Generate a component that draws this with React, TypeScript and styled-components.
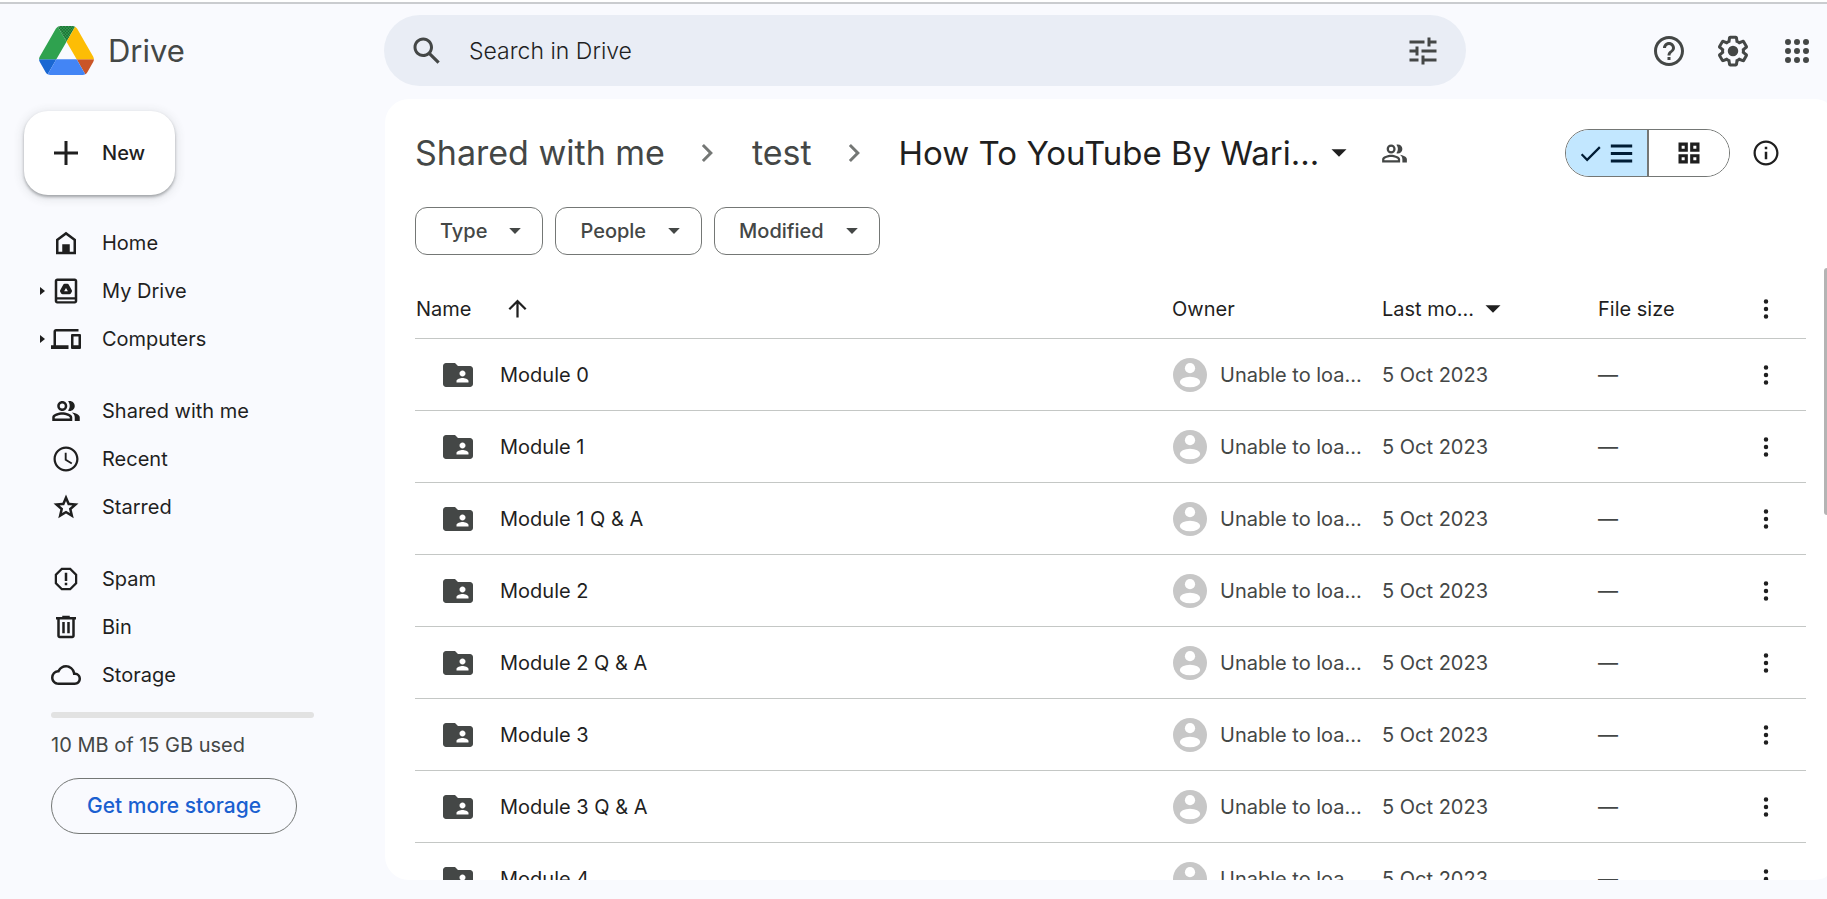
import React from 'react';
import styled, { createGlobalStyle } from 'styled-components';

const GlobalStyle = createGlobalStyle`
  *, *::before, *::after { box-sizing: border-box; }
  html, body { margin: 0; background: #f9fafe; }
  body {
    font-family: Inter, Roboto, "Liberation Sans", sans-serif;
    font-size: 20px;
    line-height: 24px;
    color: #1f1f1f;
    overflow: hidden;
  }
  button, input { font: inherit; color: inherit; }
  button { background: none; border: 0; padding: 0; cursor: pointer; }
  a { color: inherit; text-decoration: none; }
  svg { display: block; flex: none; fill: currentColor; }
`;

const PATHS = {
  search:
    'M20.49 19l-5.73-5.73C15.53 12.2 16 10.91 16 9.5 16 5.91 13.09 3 9.5 3S3 5.91 3 9.5 5.91 16 9.5 16c1.41 0 2.7-.47 3.77-1.24L19 20.49 20.49 19zM5 9.5C5 7.01 7.01 5 9.5 5S14 7.01 14 9.5 11.99 14 9.5 14 5 11.99 5 9.5z',
  tune: 'M3 17v2h6v-2H3zM3 5v2h10V5H3zm10 16v-2h8v-2h-8v-2h-2v6h2zM7 9v2H3v2h4v2h2V9H7zm14 4v-2H11v2h10zm-6-4h2V7h4V5h-4V3h-2v6z',
  help: 'M11 18h2v-2h-2v2zm1-16C6.48 2 2 6.48 2 12s4.48 10 10 10 10-4.48 10-10S17.52 2 12 2zm0 18c-4.41 0-8-3.59-8-8s3.59-8 8-8 8 3.59 8 8-3.59 8-8 8zm0-14c-2.21 0-4 1.79-4 4h2c0-1.1.9-2 2-2s2 .9 2 2c0 2-3 1.75-3 5h2c0-2.25 3-2.5 3-5 0-2.21-1.79-4-4-4z',
  settings:
    'M13.85 22.25h-3.7c-.74 0-1.36-.54-1.45-1.27l-.27-1.89c-.27-.14-.53-.29-.79-.46l-1.8.72c-.7.26-1.47-.03-1.81-.65L2.2 15.53c-.35-.66-.2-1.44.36-1.88l1.53-1.19c-.01-.15-.02-.3-.02-.46 0-.15.01-.31.02-.46l-1.52-1.19c-.59-.45-.74-1.26-.37-1.88l1.85-3.19c.34-.62 1.11-.9 1.79-.63l1.81.73c.26-.17.52-.32.78-.46l.27-1.91c.09-.7.71-1.25 1.44-1.25h3.7c.74 0 1.36.54 1.45 1.27l.27 1.89c.27.14.53.29.79.46l1.8-.72c.71-.26 1.48.03 1.82.65l1.84 3.18c.36.66.2 1.44-.36 1.88l-1.52 1.19c.01.15.02.3.02.46s-.01.31-.02.46l1.52 1.19c.56.45.72 1.23.37 1.86l-1.86 3.22c-.34.62-1.11.9-1.8.63l-1.8-.72c-.26.17-.52.32-.78.46l-.27 1.91c-.1.68-.72 1.22-1.46 1.22zm-3.23-2h2.76l.37-2.55.53-.22c.44-.18.88-.44 1.34-.78l.45-.34 2.38.96 1.38-2.4-2.03-1.58.07-.56c.03-.26.06-.51.06-.78s-.03-.53-.06-.78l-.07-.56 2.03-1.58-1.39-2.4-2.39.96-.45-.35c-.42-.32-.87-.58-1.33-.77l-.52-.22-.37-2.55h-2.76l-.37 2.55-.53.21c-.44.19-.88.44-1.34.79l-.45.33-2.38-.95-1.39 2.39 2.03 1.58-.07.56a7 7 0 0 0-.06.79c0 .26.02.53.06.78l.07.56-2.03 1.58 1.38 2.4 2.39-.96.45.35c.43.33.86.58 1.33.77l.53.22.38 2.55zM12 8.5a3.5 3.5 0 1 1 0 7 3.5 3.5 0 0 1 0-7z',
  apps: 'M6 4a2 2 0 1 1 0 4 2 2 0 0 1 0-4zm6 0a2 2 0 1 1 0 4 2 2 0 0 1 0-4zm6 0a2 2 0 1 1 0 4 2 2 0 0 1 0-4zM6 10a2 2 0 1 1 0 4 2 2 0 0 1 0-4zm6 0a2 2 0 1 1 0 4 2 2 0 0 1 0-4zm6 0a2 2 0 1 1 0 4 2 2 0 0 1 0-4zM6 16a2 2 0 1 1 0 4 2 2 0 0 1 0-4zm6 0a2 2 0 1 1 0 4 2 2 0 0 1 0-4zm6 0a2 2 0 1 1 0 4 2 2 0 0 1 0-4z',
  plus: 'M20 13h-7v7h-2v-7H4v-2h7V4h2v7h7v2z',
  home: 'M12 3L4 9v12h16V9l-8-6zm6 16h-3v-6H9v6H6v-9l6-4.5 6 4.5v9z',
  drive:
    'M19 2H5c-1.1 0-2 .9-2 2v16c0 1.1.9 2 2 2h14c1.1 0 2-.9 2-2V4c0-1.1-.9-2-2-2zm0 18.2H5v-1.5h14v1.5zm0-3.2H5V4h14v13zM13.1 6.2h-2.2c-.5 0-.9.25-1.15.7l-2.4 4.4c-.25.45-.25.9 0 1.3l.8 1.3c.25.4.65.6 1.1.6h5.5c.45 0 .85-.2 1.1-.6l.8-1.3c.25-.4.25-.85 0-1.3l-2.4-4.4c-.25-.45-.65-.7-1.15-.7zM10.5 12.2l1.5-2.7 1.5 2.7h-3z',
  devices:
    'M4 6h18V4H4c-1.1 0-2 .9-2 2v11H0v3h14v-3H4V6zm19 2h-6c-.55 0-1 .45-1 1v10c0 .55.45 1 1 1h6c.55 0 1-.45 1-1V9c0-.55-.45-1-1-1zm-1 9h-4v-7h4v7z',
  people:
    'M15 8c0-1.42-.5-2.73-1.33-3.76.42-.14.86-.24 1.33-.24 2.21 0 4 1.79 4 4s-1.79 4-4 4c-.43 0-.84-.09-1.23-.21-.03-.01-.06-.02-.1-.03A5.98 5.98 0 0 0 15 8zm1.66 5.13C18.03 14.06 19 15.32 19 17v3h4v-3c0-2.18-3.58-3.47-6.34-3.87zM9 6a2 2 0 1 0 0 4 2 2 0 0 0 0-4m0 6c-2.21 0-4-1.79-4-4s1.79-4 4-4 4 1.79 4 4-1.79 4-4 4zm0 1c-2.67 0-8 1.34-8 4v3h16v-3c0-2.66-5.33-4-8-4zm6 5H3v-.99C3.2 16.29 6.3 15 9 15s5.8 1.29 6 2v1z',
  clock:
    'M12 2C6.48 2 2 6.48 2 12s4.48 10 10 10 10-4.48 10-10S17.52 2 12 2zm0 18.2c-4.52 0-8.2-3.68-8.2-8.2S7.48 3.8 12 3.8s8.2 3.68 8.2 8.2-3.68 8.2-8.2 8.2zM12.5 7H11v6l5.25 3.15.75-1.23-4.5-2.67V7z',
  star: 'M12 7.13l.97 2.29.47 1.11 1.2.1 2.47.21-1.88 1.63-.91.79.27 1.18.56 2.41-2.12-1.28-1.03-.64-1.03.62-2.12 1.28.56-2.41.27-1.18-.91-.79-1.88-1.63 2.47-.21 1.2-.1.47-1.11.97-2.27M12 2L9.19 8.63 2 9.24l5.46 4.73L5.82 21 12 17.27 18.18 21l-1.64-7.03L22 9.24l-7.19-.61L12 2z',
  spam: 'M15.73 3H8.27L3 8.27v7.46L8.27 21h7.46L21 15.73V8.27L15.73 3zM19.2 15L15 19.2H9L4.8 15V9L9 4.8h6L19.2 9v6zM11 7h2v6.5h-2zm0 8h2v2h-2z',
  bin: 'M15 4V3H9v1H4v2h1v13c0 1.1.9 2 2 2h10c1.1 0 2-.9 2-2V6h1V4h-5zm2 15H7V6h10v13zM9 8h2v9H9zm4 0h2v9h-2z',
  cloud:
    'M19.35 10.04A7.49 7.49 0 0 0 12 4C9.11 4 6.6 5.64 5.35 8.04A5.994 5.994 0 0 0 0 14c0 3.31 2.69 6 6 6h13c2.76 0 5-2.24 5-5 0-2.64-2.05-4.78-4.65-4.96zM19 18H6c-2.21 0-4-1.79-4-4 0-2.05 1.53-3.76 3.56-3.97l1.07-.11.5-.95A5.469 5.469 0 0 1 12 6c2.62 0 4.88 1.86 5.39 4.43l.3 1.5 1.53.11A2.98 2.98 0 0 1 22 15c0 1.65-1.35 3-3 3z',
  folder:
    'M20 6h-8l-2-2H4c-1.1 0-1.99.9-1.99 2L2 18c0 1.1.9 2 2 2h16c1.1 0 2-.9 2-2V8c0-1.1-.9-2-2-2zm-5 3c1.1 0 2 .9 2 2s-.9 2-2 2-2-.9-2-2 .9-2 2-2zm4 8h-8v-1c0-1.33 2.67-2 4-2s4 .67 4 2v1z',
  info: 'M11 17h2v-6h-2v6zm1-15C6.48 2 2 6.48 2 12s4.48 10 10 10 10-4.48 10-10S17.52 2 12 2zm0 18.2c-4.52 0-8.2-3.68-8.2-8.2S7.48 3.8 12 3.8s8.2 3.68 8.2 8.2-3.68 8.2-8.2 8.2zM11 9h2V7h-2v2z',
  chevron: 'M9.31 6L7.9 7.41 12.49 12 7.9 16.59 9.31 18l6-6z',
  check: 'M9 16.2L4.8 12l-1.4 1.4L9 19 21 7l-1.4-1.4L9 16.2z',
  list: 'M2.5 4h19v2.7h-19zm0 6.7h19v2.7h-19zm0 6.7h19v2.7h-19z',
  arrowUp: 'M4 12l1.41 1.41L11 7.83V20h2V7.83l5.58 5.59L20 12l-8-8-8 8z',
  more: 'M12 4.2a1.8 1.8 0 1 1 0 3.6 1.8 1.8 0 0 1 0-3.6zm0 6a1.8 1.8 0 1 1 0 3.6 1.8 1.8 0 0 1 0-3.6zm0 6a1.8 1.8 0 1 1 0 3.6 1.8 1.8 0 0 1 0-3.6z',
  caretDown: 'M7 9.5l5 5 5-5z',
  grid: 'M3 3v8h8V3H3zm5.3 5.3H5.7V5.7h2.6v2.6zM3 13v8h8v-8H3zm5.3 5.3H5.7v-2.6h2.6v2.6zM13 3v8h8V3h-8zm5.3 5.3h-2.6V5.7h2.6v2.6zM13 13v8h8v-8h-8zm5.3 5.3h-2.6v-2.6h2.6v2.6z',
};

type IconName = keyof typeof PATHS;

function Icon({ name, size = 30 }: { name: IconName; size?: number }) {
  return (
    <svg width={size} height={size} viewBox="0 0 24 24" aria-hidden="true">
      <path fillRule="evenodd" d={PATHS[name]} />
    </svg>
  );
}

function DriveLogo() {
  return (
    <svg width="55" height="49" viewBox="0 0 87.3 78" aria-hidden="true">
      <defs>
        <pattern id="greenDots" width="4.8" height="4.8" patternUnits="userSpaceOnUse">
          <rect width="4.8" height="4.8" fill="#2fa24f" />
          <rect x="0.4" y="0.4" width="1.7" height="1.7" fill="#10301a" />
          <rect x="2.8" y="2.8" width="1.7" height="1.7" fill="#10301a" />
        </pattern>
      </defs>
      <path d="m6.6 66.85 3.85 6.65c.8 1.4 1.95 2.5 3.3 3.3l13.75-23.8h-27.5c0 1.55.4 3.1 1.2 4.5z" fill="#1967d2" />
      <path d="m43.65 25-13.75-23.8c-1.35.8-2.5 1.9-3.3 3.3l-25.4 44a9.06 9.06 0 0 0 -1.2 4.5h27.5z" fill="#2fa24f" />
      <path d="m73.55 76.8c1.35-.8 2.5-1.9 3.3-3.3l1.6-2.75 7.65-13.25c.8-1.4 1.2-2.95 1.2-4.5h-27.5z" fill="#ca5528" />
      <path d="m43.65 25 13.75-23.8c-1.35-.8-2.9-1.2-4.5-1.2h-18.5c-1.6 0-3.15.45-4.5 1.2z" fill="url(#greenDots)" />
      <path d="m59.8 53h-32.3l-13.75 23.8c1.35.8 2.9 1.2 4.5 1.2h50.8c1.6 0 3.15-.45 4.5-1.2z" fill="#4385f5" />
      <path d="m73.4 26.5-12.7-22c-.8-1.4-1.95-2.5-3.3-3.3l-13.75 23.8 16.15 28h27.45c0-1.55-.4-3.1-1.2-4.5z" fill="#fdbd05" />
    </svg>
  );
}

const Shell = styled.div`
  height: 100vh;
  display: grid;
  grid-template: auto minmax(0, 1fr) / 384px minmax(0, 1fr);
  overflow: hidden;
  border-top: 2px solid #ffffff;
  padding-bottom: 19px;
`;

const TopBar = styled.header`
  grid-column: 1 / -1;
  display: flex;
  align-items: center;
  border-top: 2px solid #cacccf;
  padding: 11px 12px 13px 0;
`;

const Brand = styled.a`
  width: 384px;
  flex: none;
  display: flex;
  align-items: center;
  gap: 14px;
  padding-left: 39px;
  font-size: 31px;
  line-height: 40px;
  color: #444746;
`;

const SearchBar = styled.form`
  flex: 0 1 1082px;
  height: 71px;
  display: flex;
  align-items: center;
  padding: 0 25px;
  border-radius: 36px;
  background: #e9edf5;
  color: #444746;
`;

const SearchField = styled.input`
  flex: 1;
  min-width: 0;
  margin: 0 24px;
  padding: 0;
  border: 0;
  outline: 0;
  background: none;
  font-size: 23px;
  font-weight: 300;
  line-height: 28px;
  &::placeholder { color: #1f1f1f; opacity: 1; }
`;

const HeaderActions = styled.div`
  margin-left: auto;
  display: flex;
  align-items: center;
  gap: 28px;
  color: #444746;
`;

const Sidebar = styled.aside`
  display: flex;
  flex-direction: column;
  align-items: flex-start;
  padding: 12px 0 0 24px;
`;

const NewButton = styled.button`
  display: flex;
  align-items: center;
  gap: 18px;
  height: 84px;
  padding: 0 30px 0 24px;
  border-radius: 24px;
  background: #ffffff;
  font-weight: 500;
  box-shadow: 0 2px 3px rgba(60, 64, 67, 0.4), 0 2px 10px 2px rgba(60, 64, 67, 0.12);
`;

const Nav = styled.nav`
  margin: 24px 0 0 13px;
  display: flex;
  flex-direction: column;
  gap: 24px;
`;

const NavGroup = styled.ul`
  margin: 0;
  padding: 0;
  list-style: none;
`;

const NavItem = styled.li`
  height: 48px;
  display: flex;
  align-items: center;
`;

const Expander = styled.button`
  width: 14px;
  padding-left: 3px;
  display: flex;
`;

const NavLink = styled.a`
  display: flex;
  align-items: center;
  gap: 21px;
`;

const Storage = styled.section`
  width: 263px;
  margin: 13px 0 0 27px;
`;

const StorageBar = styled.div`
  height: 6px;
  border-radius: 3px;
  background: #e2e2e2;
`;

const StorageText = styled.p`
  margin: 15px 0 21px;
  color: #444746;
`;

const StorageButton = styled.button`
  height: 56px;
  padding: 0 35px;
  border: 1px solid #747775;
  border-radius: 28px;
  color: #1a60d0;
  font-size: 21px;
  font-weight: 500;
  white-space: nowrap;
`;

const Panel = styled.main`
  position: relative;
  display: flex;
  flex-direction: column;
  min-width: 0;
  margin-left: 1px;
  padding: 18px 21px 0 30px;
  border-radius: 24px 14px 14px 24px / 24px 5px 5px 24px;
  background: #ffffff;
  overflow: hidden;
`;

const ScrollThumb = styled.div`
  position: absolute;
  top: 169px;
  right: 0;
  width: 3px;
  height: 247px;
  border-radius: 3px 0 0 3px;
  background: #b4b4b4;
`;

const TitleRow = styled.div`
  flex: none;
  height: 72px;
  display: flex;
  align-items: center;
  justify-content: space-between;
`;

const Breadcrumbs = styled.ol`
  margin: 0;
  padding: 0;
  list-style: none;
  display: flex;
  align-items: center;
  line-height: 44px;
  white-space: nowrap;
`;

const Crumb = styled.li<{ $current?: boolean }>`
  display: flex;
  align-items: center;
  font-size: ${(p) => (p.$current ? 33 : 34)}px;
  color: ${(p) => (p.$current ? '#1f1f1f' : '#444746')};
`;

const Separator = styled.span`
  width: 87px;
  display: flex;
  justify-content: center;
  color: #747775;
`;

const CrumbMenu = styled.button`
  margin-left: 2px;
`;

const SharedButton = styled.button`
  margin-left: 24px;
  color: #444746;
`;

const ViewActions = styled.div`
  display: flex;
  align-items: center;
  gap: 21px;
  padding-right: 25px;
`;

const Toggle = styled.div`
  width: 165px;
  height: 48px;
  display: flex;
  border: 1px solid #747775;
  border-radius: 24px;
  overflow: hidden;
`;

const ToggleHalf = styled.button<{ $on?: boolean }>`
  flex: 1;
  display: flex;
  align-items: center;
  justify-content: center;
  gap: 4px;
  background: ${(p) => (p.$on ? '#c2e7ff' : '#ffffff')};
  color: ${(p) => (p.$on ? '#001d35' : '#1f1f1f')};
  & + & { border-left: 2px solid #747775; }
`;

const Chips = styled.div`
  display: flex;
  gap: 12px;
  margin-top: 18px;
`;

const Chip = styled.button`
  height: 48px;
  display: flex;
  align-items: center;
  gap: 14px;
  padding: 0 13px 0 24px;
  border: 1px solid #747775;
  border-radius: 12px;
  color: #444746;
  font-weight: 500;
`;

const Files = styled.table`
  width: 100%;
  margin-top: 24px;
  table-layout: fixed;
  border-collapse: separate;
  border-spacing: 0;
  text-align: left;
`;

const Col = styled.col<{ $width?: number }>`
  width: ${(p) => (p.$width ? `${p.$width}px` : 'auto')};
`;

const HeadCell = styled.th`
  height: 60px;
  padding: 0;
  border-bottom: 1px solid #c4c7c5;
  font-weight: 400;
`;

const Cell = styled.td<{ $strong?: boolean }>`
  height: 72px;
  padding: 1px 0 0;
  border-bottom: 1px solid #c4c7c5;
  white-space: nowrap;
  color: ${(p) => (p.$strong ? '#1f1f1f' : '#444746')};
`;

const Inline = styled.span<{ $gap: number; $indent?: number }>`
  display: flex;
  align-items: center;
  gap: ${(p) => p.$gap}px;
  padding-left: ${(p) => p.$indent ?? 0}px;
`;

const FolderTint = styled.span`
  color: #444746;
`;

const MoreButton = styled.button`
  display: flex;
  width: 48px;
  justify-content: center;
  color: #1f1f1f;
`;

const NAV: { icon: IconName; label: string; expandable?: boolean }[][] = [
  [
    { icon: 'home', label: 'Home' },
    { icon: 'drive', label: 'My Drive', expandable: true },
    { icon: 'devices', label: 'Computers', expandable: true },
  ],
  [
    { icon: 'people', label: 'Shared with me' },
    { icon: 'clock', label: 'Recent' },
    { icon: 'star', label: 'Starred' },
  ],
  [
    { icon: 'spam', label: 'Spam' },
    { icon: 'bin', label: 'Bin' },
    { icon: 'cloud', label: 'Storage' },
  ],
];

const FOLDERS = [
  'Module 0',
  'Module 1',
  'Module 1 Q & A',
  'Module 2',
  'Module 2 Q & A',
  'Module 3',
  'Module 3 Q & A',
  'Module 4',
];

function Avatar() {
  return (
    <svg width="34" height="34" viewBox="2 2 20 20" aria-hidden="true">
      <circle cx="12" cy="12" r="10" fill="#c7c7c7" />
      <circle cx="12" cy="8" r="3" fill="#ffffff" />
      <ellipse cx="12" cy="16.1" rx="6" ry="3.1" fill="#ffffff" />
    </svg>
  );
}

export default function App() {
  return (
    <>
      <GlobalStyle />
      <Shell>
        <TopBar>
          <Brand href="#drive">
            <DriveLogo />
            Drive
          </Brand>
          <SearchBar role="search">
            <button type="button" aria-label="Search">
              <Icon name="search" size={36} />
            </button>
            <SearchField type="text" placeholder="Search in Drive" aria-label="Search in Drive" />
            <button type="button" aria-label="Advanced search">
              <Icon name="tune" size={36} />
            </button>
          </SearchBar>
          <HeaderActions>
            <button aria-label="Support">
              <Icon name="help" size={36} />
            </button>
            <button aria-label="Settings">
              <Icon name="settings" size={36} />
            </button>
            <button aria-label="Google apps">
              <Icon name="apps" size={36} />
            </button>
          </HeaderActions>
        </TopBar>

        <Sidebar>
          <NewButton>
            <Icon name="plus" size={36} />
            New
          </NewButton>
          <Nav>
            {NAV.map((group, i) => (
              <NavGroup key={i}>
                {group.map((item) => (
                  <NavItem key={item.label}>
                    <Expander
                      as={item.expandable ? 'button' : 'span'}
                      aria-label={item.expandable ? `Expand ${item.label}` : undefined}
                    >
                      {item.expandable && (
                        <svg width="5" height="8" viewBox="0 0 5 8" aria-hidden="true">
                          <path d="M0 0l5 4-5 4z" />
                        </svg>
                      )}
                    </Expander>
                    <NavLink href={`#${item.icon}`}>
                      <Icon name={item.icon} />
                      {item.label}
                    </NavLink>
                  </NavItem>
                ))}
              </NavGroup>
            ))}
          </Nav>
          <Storage>
            <StorageBar />
            <StorageText>10 MB of 15 GB used</StorageText>
            <StorageButton>Get more storage</StorageButton>
          </Storage>
        </Sidebar>

        <Panel>
          <TitleRow>
            <Breadcrumbs>
              <Crumb>
                <a href="#shared">Shared with me</a>
                <Separator>
                  <Icon name="chevron" size={36} />
                </Separator>
              </Crumb>
              <Crumb>
                <a href="#test">test</a>
                <Separator>
                  <Icon name="chevron" size={36} />
                </Separator>
              </Crumb>
              <Crumb $current>
                How To YouTube By Wari...
                <CrumbMenu aria-label="Folder actions">
                  <Icon name="caretDown" size={36} />
                </CrumbMenu>
                <SharedButton aria-label="Manage access">
                  <Icon name="people" size={27} />
                </SharedButton>
              </Crumb>
            </Breadcrumbs>
            <ViewActions>
              <Toggle>
                <ToggleHalf $on aria-label="List layout">
                  <Icon name="check" size={27} />
                  <Icon name="list" size={27} />
                </ToggleHalf>
                <ToggleHalf aria-label="Grid layout">
                  <Icon name="grid" size={28} />
                </ToggleHalf>
              </Toggle>
              <button aria-label="View details">
                <Icon name="info" />
              </button>
            </ViewActions>
          </TitleRow>

          <Chips>
            {['Type', 'People', 'Modified'].map((label) => (
              <Chip key={label}>
                {label}
                <Icon name="caretDown" size={28} />
              </Chip>
            ))}
          </Chips>

          <Files>
            <colgroup>
              <Col />
              <Col $width={210} />
              <Col $width={216} />
              <Col $width={144} />
              <Col $width={64} />
            </colgroup>
            <thead>
              <tr>
                <HeadCell>
                  <Inline $gap={33} $indent={1}>
                    Name
                    <Icon name="arrowUp" size={27} />
                  </Inline>
                </HeadCell>
                <HeadCell>Owner</HeadCell>
                <HeadCell>
                  <Inline $gap={1}>
                    Last mo...
                    <Icon name="caretDown" size={36} />
                  </Inline>
                </HeadCell>
                <HeadCell>File size</HeadCell>
                <HeadCell>
                  <MoreButton aria-label="More options">
                    <Icon name="more" />
                  </MoreButton>
                </HeadCell>
              </tr>
            </thead>
            <tbody>
              {FOLDERS.map((name) => (
                <tr key={name}>
                  <Cell $strong>
                    <Inline $gap={24} $indent={25}>
                      <FolderTint>
                        <Icon name="folder" size={36} />
                      </FolderTint>
                      {name}
                    </Inline>
                  </Cell>
                  <Cell>
                    <Inline $gap={13} $indent={1}>
                      <Avatar />
                      Unable to loa...
                    </Inline>
                  </Cell>
                  <Cell>5 Oct 2023</Cell>
                  <Cell>—</Cell>
                  <Cell>
                    <MoreButton aria-label={`Actions for ${name}`}>
                      <Icon name="more" />
                    </MoreButton>
                  </Cell>
                </tr>
              ))}
            </tbody>
          </Files>
          <ScrollThumb />
        </Panel>
      </Shell>
    </>
  );
}
